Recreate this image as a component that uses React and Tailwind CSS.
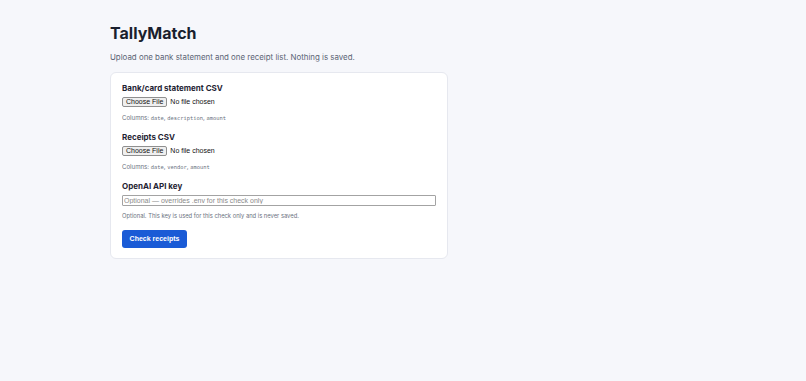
import React from "react";

const sans = { fontFamily: "Inter, 'Noto Sans', sans-serif" };

function FileField({ label, columns }) {
  return (
    <div className="flex flex-col">
      <label className="text-[8px] font-bold leading-[11px] text-[#1f2433]">{label}</label>
      <input
        type="file"
        className="mt-[3px] h-[10px] text-[7px] leading-[10px] text-[#111] [font-family:'Liberation_Sans',Arial,sans-serif] file:mr-[3px] file:h-[10px] file:rounded-[2px] file:border file:border-[#8f8f8f] file:bg-[#efefef] file:px-[3px] file:text-[7px] file:leading-[8px] file:text-[#111]"
      />
      <p className="mt-[6px] h-[9px] overflow-visible text-[6.1px] leading-[9px] text-[#6b7280]">
        Columns:{" "}
        {columns.map((c, i) => (
          <span key={c}>
            <code className="text-[5.4px] leading-[9px] [font-family:'DejaVu_Sans_Mono',monospace]">{c}</code>
            {i < columns.length - 1 ? ", " : ""}
          </span>
        ))}
      </p>
    </div>
  );
}

export default function App() {
  return (
    <div className="min-h-screen w-full bg-[#f6f7fb]" style={sans}>
      <div className="ml-[110px] w-[338px] pt-[23px]">
        <h1 className="text-[16px] font-bold leading-[20px] text-[#1a1f2e]">TallyMatch</h1>
        <p className="mt-[9px] h-[11px] text-[7.9px] leading-[11px] text-[#5b6475]">
          Upload one bank statement and one receipt list. Nothing is saved.
        </p>
        <div className="mt-[9px] rounded-[6px] border border-[#e6e8ef] bg-white px-[11px] pt-[10px] pb-[10px]">
          <FileField label="Bank/card statement CSV" columns={["date", "description", "amount"]} />
          <div className="mt-[10px]">
            <FileField label="Receipts CSV" columns={["date", "vendor", "amount"]} />
          </div>
          <div className="mt-[10px] flex flex-col">
            <label className="text-[8px] font-bold leading-[11px] text-[#1f2433]">OpenAI API key</label>
            <input
              type="text"
              placeholder="Optional — overrides .env for this check only"
              className="mt-[3px] h-[11px] w-full rounded-[1px] border border-[#a3a3a3] bg-white px-[1px] text-[7px] leading-[9px] [font-family:'Liberation_Sans',Arial,sans-serif] placeholder:text-[#8a8a8a] outline-none"
            />
            <p className="mt-[5px] h-[9px] text-[5.8px] leading-[9px] text-[#6b7280]">
              Optional. This key is used for this check only and is never saved.
            </p>
          </div>
          <button className="mt-[10px] block h-[18px] w-[65px] rounded-[3px] bg-[#1a5bd6] text-[7px] font-bold text-white [font-family:'Liberation_Sans',Arial,sans-serif]">
            Check receipts
          </button>
        </div>
      </div>
    </div>
  );
}
